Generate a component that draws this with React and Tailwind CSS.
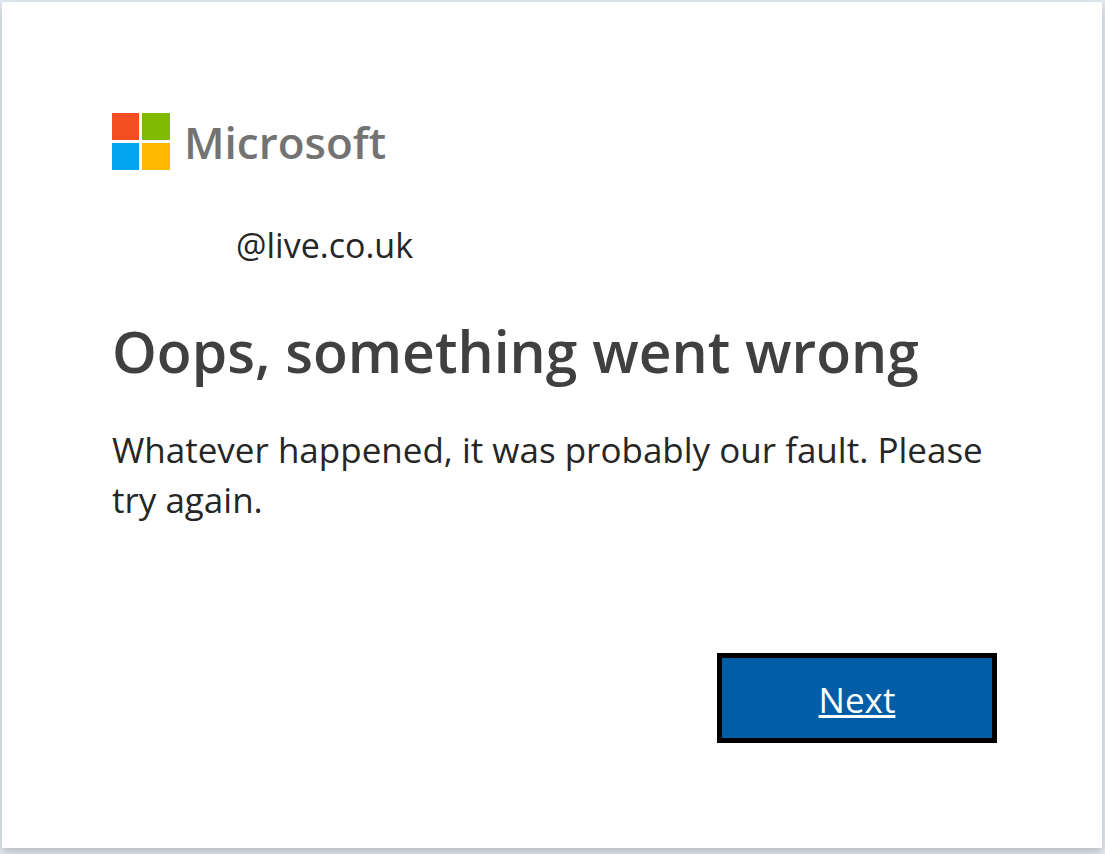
export default function App() {
  return (
    <div className="min-h-screen bg-[#e4ebf1] pt-[2px] pr-[3px] pb-[6px] pl-[2px] font-['Open_Sans','Noto_Sans',sans-serif]">
      <main className="flex min-h-[846px] flex-col bg-white px-[110px] pt-[111px] pb-[105px] text-[#262626] shadow-[0_4px_10px_rgba(0,0,0,0.22)]">
        <div className="flex h-[58px] items-center gap-[14px]">
          <svg className="size-[58px]" viewBox="0 0 58 58" aria-hidden="true">
            <path fill="#f25022" d="M0 0h27v27H0z" />
            <path fill="#7fba00" d="M30 0h28v27H30z" />
            <path fill="#00a4ef" d="M0 30h27v27H0z" />
            <path fill="#ffb900" d="M30 30h28v27H30z" />
          </svg>
          <span className="text-[44px] leading-[56px] font-semibold text-[#737373]">Microsoft</span>
        </div>
        <p className="mt-[48px] pl-[124px] text-[34px] leading-[52px]">@live.co.uk</p>
        <h1 className="mt-[42px] text-[57px] leading-[76px] font-semibold text-[#404040]">Oops, something went wrong</h1>
        <p className="mt-[36px] text-[35px] leading-[50px]">Whatever happened, it was probably our fault. Please try again.</p>
        <div className="mt-auto flex justify-end">
          <button type="button" className="mr-[-5px] h-[90px] w-[280px] border-[5px] border-black bg-[#005da6] pt-[4px] text-[35px] text-white underline decoration-3">Next</button>
        </div>
      </main>
    </div>
  );
}
